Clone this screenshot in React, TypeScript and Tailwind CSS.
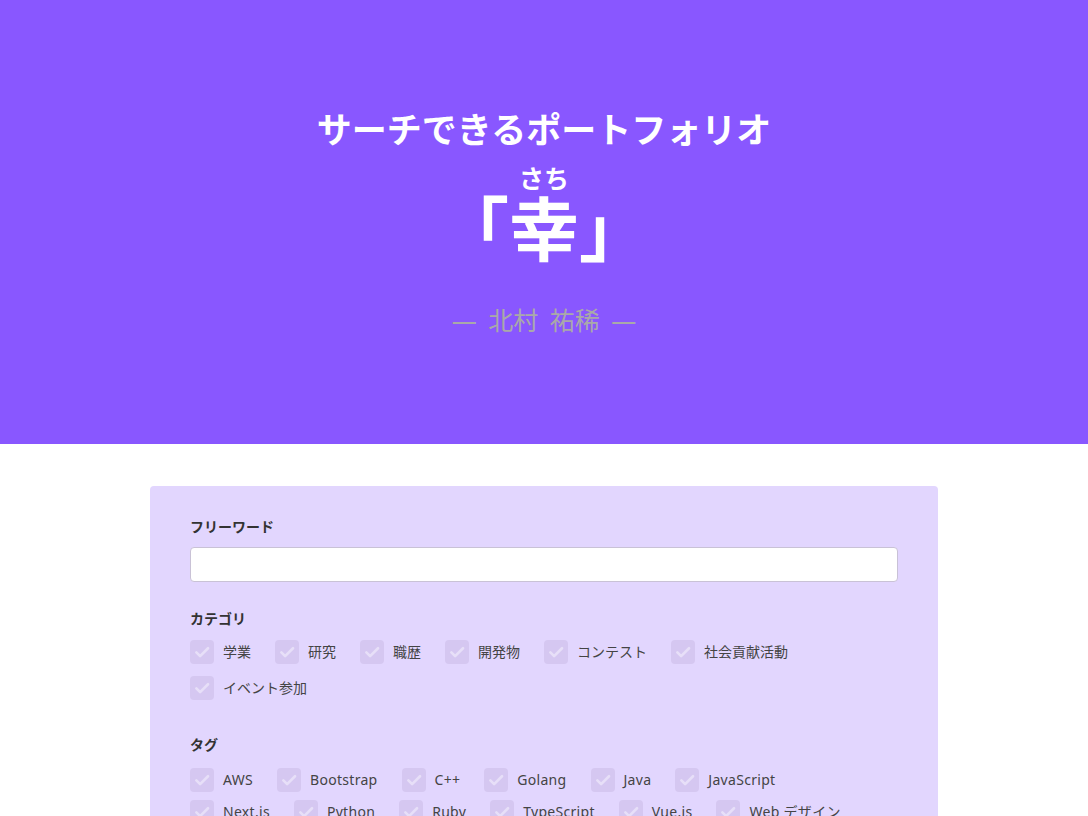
import { useState } from 'react';

const categories = ['学業', '研究', '職歴', '開発物', 'コンテスト', '社会貢献活動', 'イベント参加'];
const tags = ['AWS', 'Bootstrap', 'C++', 'Golang', 'Java', 'JavaScript', 'Next.js', 'Python', 'Ruby', 'TypeScript', 'Vue.js', 'Web デザイン'];

const Check = ({ label, latin = false }: { label: string; latin?: boolean }) => {
  const [on, setOn] = useState(false);
  return (
    <label className="flex items-center mr-6 cursor-pointer" onClick={() => setOn(!on)}>
      <span className={`w-6 h-6 rounded-[4px] flex items-center justify-center ${on ? 'bg-[#8957ff]' : 'bg-[#d5c7f1]'}`}>
        <svg className="w-[18px] h-[18px]" viewBox="0 0 24 24" fill="none" stroke={on ? '#ffffff' : '#e7dff8'} strokeWidth={3.5} strokeLinecap="round" strokeLinejoin="round">
          <path d="M4.5 12.5l5 5L20 7" />
        </svg>
      </span>
      <span className={`ml-[9px] text-sm text-[#444] ${latin ? 'tracking-[0.3px]' : ''}`}>{label}</span>
    </label>
  );
};

export default function App() {
  return (
    <div className="min-h-screen bg-white" style={{ fontFamily: '"Noto Sans", "Noto Sans CJK JP", sans-serif' }}>
      {/* Header */}
      <header className="h-[444px] bg-[#8957ff] flex flex-col items-center justify-center text-white">
        <h1 className="text-[35px] font-bold leading-tight mt-[4px]">サーチできるポートフォリオ</h1>
        <div className="mt-[14px] flex items-end text-[70px] font-bold leading-none">
          <span>「</span>
          <span className="flex flex-col items-center">
            <span className="text-[25px] leading-none mb-[3px]">さち</span>
            <span>幸</span>
          </span>
          <span>」</span>
        </div>
        <p className="mt-[38px] text-[25px] text-[#a9a9a9] [word-spacing:5px]">— 北村 祐稀 —</p>
      </header>

      {/* Search panel */}
      <main className="w-[788px] mx-auto mt-[42px] bg-[#e2d6fe] rounded-[4px] px-10 pt-[31px] pb-10">
        <h2 className="text-sm font-bold text-[#333] leading-5">フリーワード</h2>
        <input
          type="text"
          className="mt-[10px] w-full h-[35px] bg-white border border-[#c9c2d6] rounded-[4px] px-3 text-sm outline-none"
        />

        <h2 className="mt-[27px] text-sm font-bold text-[#333] leading-5">カテゴリ</h2>
        <div className="mt-[11px] flex flex-wrap gap-y-3">
          {categories.map((c) => (
            <Check key={c} label={c} />
          ))}
        </div>

        <h2 className="mt-[35px] text-sm font-bold text-[#333] leading-5">タグ</h2>
        <div className="mt-[13px] flex flex-wrap gap-y-2">
          {tags.map((t) => (
            <Check key={t} label={t} latin />
          ))}
        </div>
      </main>
    </div>
  );
}
